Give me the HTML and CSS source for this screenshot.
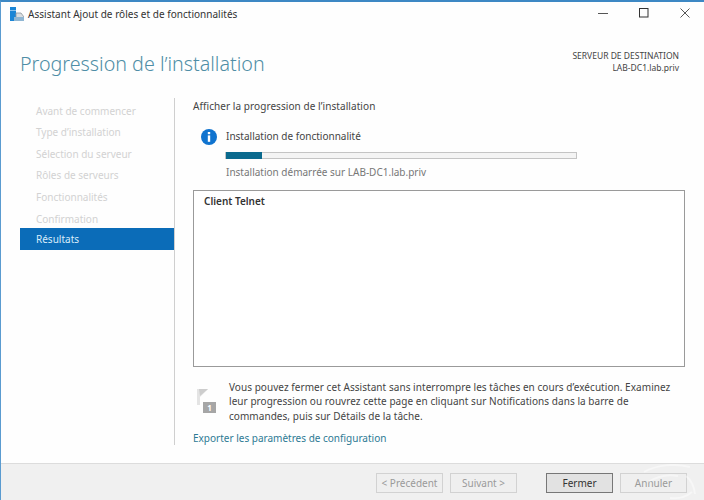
FILE: index.html
```html
<!DOCTYPE html>
<html lang="fr">
<head>
<meta charset="utf-8">
<title>Assistant Ajout de rôles et de fonctionnalités</title>
<link rel="stylesheet" href="styles.css">
</head>
<body>
<div class="window">
  <div class="titlebar">
    <svg class="app-icon" width="14" height="14" viewBox="0 0 14 14">
      <rect x="0" y="0" width="6" height="3" fill="#1b86d6"/>
      <rect x="0" y="3.5" width="6" height="10.5" fill="#1b86d6"/>
      <path d="M6 6h5l3 4v4H6z" fill="#d9dde0" stroke="#8c959c" stroke-width=".8"/>
      <rect x="4" y="10" width="10" height="4" fill="#8fb6d3"/>
    </svg>
    <span class="title">Assistant Ajout de rôles et de fonctionnalités</span>
    <div class="controls">
      <svg width="10" height="10" viewBox="0 0 10 10"><path d="M0 5.5h10" stroke="#555" stroke-width="1"/></svg>
      <svg width="10" height="10" viewBox="0 0 10 10"><rect x=".5" y=".5" width="8.5" height="8.5" fill="none" stroke="#333" stroke-width="1"/></svg>
      <svg width="10" height="10" viewBox="0 0 10 10"><path d="M.5.5l9 9M9.5.5l-9 9" stroke="#444" stroke-width=".9"/></svg>
    </div>
  </div>
  <div class="header">
    <h1>Progression de l’installation</h1>
    <div class="dest">
      <div>SERVEUR DE DESTINATION</div>
      <div>LAB-DC1.lab.priv</div>
    </div>
  </div>
  <div class="main">
    <ul class="nav">
      <li>Avant de commencer</li>
      <li>Type d’installation</li>
      <li>Sélection du serveur</li>
      <li>Rôles de serveurs</li>
      <li>Fonctionnalités</li>
      <li>Confirmation</li>
      <li class="active">Résultats</li>
    </ul>
    <div class="content">
      <div class="lead">Afficher la progression de l’installation</div>
      <div class="status">
        <svg class="info" width="16" height="16" viewBox="0 0 16 16">
          <circle cx="8" cy="8" r="8" fill="#0f73cf"/>
          <rect x="6.8" y="3" width="2.4" height="2.2" fill="#fff"/>
          <rect x="6.8" y="6.4" width="2.4" height="6.4" fill="#fff"/>
        </svg>
        <div class="status-body">
          <div class="status-title">Installation de fonctionnalité</div>
          <div class="progress"><div class="bar"></div></div>
          <div class="status-note">Installation démarrée sur LAB-DC1.lab.priv</div>
        </div>
      </div>
      <div class="listbox">Client Telnet</div>
      <div class="notice">
        <svg class="notify" width="20" height="24" viewBox="0 0 20 24">
          <path d="M0 0h11L3 8v8H0z" fill="#e4e4e4"/>
          <path d="M2 0h9L3 7z" fill="#cdcdcd"/>
          <rect x="6" y="13" width="13" height="11" fill="#a6a6a6"/>
          <text class="notify-num" x="12.5" y="22" text-anchor="middle">1</text>
        </svg>
        <p>Vous pouvez fermer cet Assistant sans interrompre les tâches en cours d’exécution. Examinez leur progression ou rouvrez cette page en cliquant sur Notifications dans la barre de commandes, puis sur Détails de la tâche.</p>
      </div>
      <a class="export" href="#">Exporter les paramètres de configuration</a>
    </div>
  </div>
  <div class="footer">
    <button class="btn" disabled>&lt; Précédent</button>
    <button class="btn" disabled>Suivant &gt;</button>
    <button class="btn primary">Fermer</button>
    <button class="btn" disabled>Annuler</button>
    <svg class="watermark" width="64" height="37" viewBox="0 0 64 37">
      <path d="M4 8c12-7 30-9 46-5M8 18c10-6 20-8 30-6M46 12c5 4 8 10 9 18M30 34c8 1 16-1 22-6" fill="none" stroke="#fff" stroke-width="2" opacity=".45"/>
    </svg>
  </div>
</div>
</body>
</html>
```
FILE: styles.css
```css
* { box-sizing: border-box; }
html, body { margin: 0; padding: 0; }
body {
  width: 704px;
  height: 500px;
  overflow: hidden;
  background: #fff;
  font-family: "Noto Sans", "Open Sans", sans-serif;
  font-size: 10px;
  color: #444;
}
.window {
  width: 704px;
  height: 500px;
  display: flex;
  flex-direction: column;
  border-top: 2px solid #3d88c4;
  border-left: 1px solid #5a9bd0;
  background: #fefefe;
}
.titlebar {
  height: 24px;
  flex: none;
  display: flex;
  align-items: center;
  padding-left: 9px;
}
.app-icon { flex: none; }
.title {
  margin-left: 4px;
  color: #333;
  font-size: 10px;
  letter-spacing: 0.02px;
  white-space: nowrap;
}
.controls {
  margin-left: auto;
  margin-right: 14px;
  padding-bottom: 2px;
  display: flex;
  gap: 31px;
}
.header {
  height: 72px;
  flex: none;
  display: flex;
  justify-content: space-between;
  padding: 0 25px 0 19px;
}
h1 {
  margin: 23px 0 0;
  font-size: 19.7px;
  line-height: 30px;
  font-weight: 300;
  color: #4f8ea6;
  font-family: "Noto Sans", "Open Sans", sans-serif;
}
.dest {
  padding-top: 24px;
  text-align: right;
  font-size: 8.5px;
  line-height: 12px;
  color: #444;
}
.main {
  flex: 1;
  min-height: 0;
  display: flex;
}
.nav {
  width: 174px;
  height: 347px;
  flex: none;
  list-style: none;
  margin: 0;
  padding: 2.6px 0 0 19px;
  border-right: 1px solid #cfcfcf;
  color: #d2d2d2;
}
.nav li {
  height: 21.6px;
  line-height: 21.6px;
  padding-left: 16px;
}
.nav .active {
  margin-top: -2px;
  height: 22px;
  line-height: 23.5px;
  background: #0b6cb8;
  color: #d9ecfa;
}
.content {
  flex: 1;
  min-width: 0;
  padding: 0 19px 0 18px;
  display: flex;
  flex-direction: column;
}
.lead {
  line-height: 14px;
  margin-top: 1px;
  color: #444;
  letter-spacing: 0.07px;
}
.status {
  display: flex;
  margin-top: 15px;
  padding-left: 8px;
}
.info { flex: none; margin-top: 1px; }
.status-body { margin-left: 9px; }
.status-title { line-height: 14px; margin-top: 1px; }
.progress {
  width: 352px;
  height: 7px;
  margin: 9px 0 0 -1px;
  border: 1px solid #c4c4c4;
  background: #f4f4f4;
}
.bar { width: 36px; height: 7px; margin-top: -1px; background: #0b6a8e; }
.status-note { margin-top: 6px; line-height: 14px; color: #777; }
.listbox {
  height: 177px;
  margin-top: 11px;
  border: 1px solid #9a9a9a;
  background: #fff;
  padding: 3px 10px;
  font-weight: 600;
  color: #333;
  line-height: 14px;
}
.notice {
  display: flex;
  margin-top: 13px;
  padding-left: 4px;
}
.notify { flex: none; margin-top: 9px; }
.notify-num { font-size: 8px; font-weight: 700; fill: #fff; }
.notice p {
  margin: 0 0 0 12px;
  width: 455px;
  line-height: 14.3px;
  letter-spacing: 0.05px;
  color: #444;
}
.export {
  margin-top: 8px;
  line-height: 14px;
  color: #2d7a94;
  text-decoration: none;
}
.footer {
  position: relative;
  height: 37px;
  flex: none;
  display: flex;
  align-items: center;
  justify-content: flex-end;
  gap: 7px;
  padding: 2px 17px 0 0;
  background: #f0f0f0;
  border-top: 1px solid #dcdcdc;
}
.btn {
  width: 67px;
  height: 20px;
  padding: 0;
  font: inherit;
  background: #efefef;
  border: 1px solid #d2d2d2;
  color: #9a9a9a;
}
.btn.primary {
  margin-left: 22px;
  background: #e2e2e2;
  border-color: #777;
  color: #333;
}
.watermark {
  position: absolute;
  right: 0;
  top: 0;
  pointer-events: none;
}
```
